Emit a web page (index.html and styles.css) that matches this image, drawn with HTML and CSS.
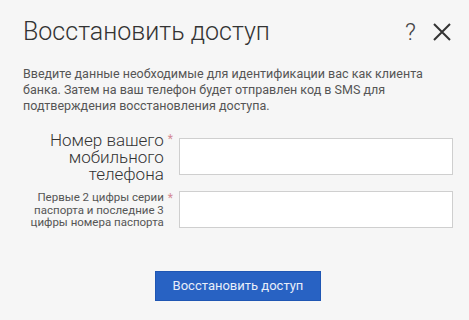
FILE: index.html
```html
<!DOCTYPE html>
<html lang="ru">

<head>
    <meta charset="utf-8" />
    <meta name="viewport" content="width=device-width, initial-scale=1.0" />
    <title>Восстановить доступ</title>
    <link rel="stylesheet" href="styles.css">
</head>

<body>
    <div class="dialog">
        <div class="dialog-header">
            <h1 class="dialog-title">Восстановить доступ</h1>
            <div class="dialog-tools">
                <span class="help">?</span>
                <!-- close icon -->
                <svg class="close" width="20" height="20" viewBox="0 0 20 20">
                    <path d="M2 2 L18 18 M18 2 L2 18" stroke="#333" stroke-width="2" fill="none" />
                </svg>
            </div>
        </div>

        <p class="intro">Введите данные необходимые для идентификации вас как клиента банка. Затем на ваш телефон будет отправлен код в SMS для подтверждения восстановления доступа.</p>

        <form class="restore-form">
            <div class="form-row">
                <label class="field-label">
                    <span class="label-text label-big">Номер вашего мобильного телефона</span>
                    <span class="required">*</span>
                </label>
                <input class="field-input row-first" type="text" />
            </div>
            <div class="form-row">
                <label class="field-label">
                    <span class="label-text label-small">Первые 2 цифры серии паспорта и последние 3 цифры номера паспорта</span>
                    <span class="required">*</span>
                </label>
                <input class="field-input" type="text" />
            </div>

            <div class="form-actions">
                <button type="button" class="btn-primary">Восстановить доступ</button>
            </div>
        </form>
    </div>
</body>

</html>
```

FILE: styles.css
```css
html {
    font-family: Roboto, "Liberation Sans", sans-serif;
    color: #333;
    background: #f6f6f6;
}

body {
    margin: 0;
}

.dialog {
    padding: 18px 16px 0 23px;
}

.dialog-header {
    display: flex;
    align-items: center;
    justify-content: space-between;
}

.dialog-title {
    margin: 0;
    font-size: 25px;
    line-height: 28px;
    font-weight: 300;
    color: #333;
}

.dialog-tools {
    display: flex;
    align-items: center;
    gap: 16px;
    padding-right: 1px;
}

.help {
    font-size: 24px;
    font-weight: 300;
    line-height: 28px;
    color: #444;
}

.close {
    display: block;
}

.intro {
    margin: 20px 0 0;
    font-size: 12.5px;
    line-height: 16px;
    color: #555;
}

.restore-form {
    margin-top: 18px;
}

.form-row {
    display: flex;
    align-items: center;
    gap: 6px;
    margin-bottom: 8px;
}

.field-label {
    width: 150px;
    flex-shrink: 0;
    display: flex;
    justify-content: flex-end;
    align-items: flex-start;
}

.label-text {
    max-width: 138px;
    text-align: right;
    color: #555;
}

.label-big {
    font-size: 17px;
    line-height: 17px;
    font-weight: 300;
    color: #333;
}

.label-small {
    font-size: 11.5px;
    line-height: 12.5px;
}

.required {
    margin-left: 4px;
    font-size: 12px;
    line-height: 14px;
    color: #d48a93;
}

.field-input {
    flex: 1;
    height: 37px;
    box-sizing: border-box;
    border: 1px solid #cfcfcf;
    background: #fff;
    margin: 0;
}

.row-first {
    margin-top: -3px;
}

.form-actions {
    display: flex;
    justify-content: center;
    margin-top: 42px;
}

.btn-primary {
    height: 30px;
    padding: 0 17px;
    border: 1px solid #1f56b3;
    background: #2862c3;
    color: #e8eef9;
    font-family: Roboto, "Liberation Sans", sans-serif;
    font-size: 13px;
}
```
